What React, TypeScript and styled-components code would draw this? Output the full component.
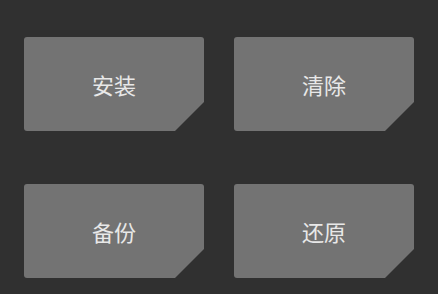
import React from "react";
import styled, { createGlobalStyle } from "styled-components";

const GlobalStyle = createGlobalStyle`
  html, body {
    margin: 0;
    padding: 0;
    background: #303030;
  }
`;

const ACTIONS = ["安装", "清除", "备份", "还原"];

const App: React.FC = () => {
  return (
    <>
      <GlobalStyle />
      <Page>
        <Grid>
          {ACTIONS.map((title) => (
            <ActionButton key={title}>{title}</ActionButton>
          ))}
        </Grid>
      </Page>
    </>
  );
};

export default App;

const Page = styled.div`
  width: 438px;
  height: 294px;
  background: #303030;
  padding: 37px 0 0 24px;
  box-sizing: border-box;
`;

const Grid = styled.div`
  display: grid;
  grid-template-columns: 180px 180px;
  grid-auto-rows: 94px;
  column-gap: 30px;
  row-gap: 53px;
`;

const ActionButton = styled.div`
  display: flex;
  align-items: center;
  justify-content: center;
  background: #737373;
  border-radius: 3px;
  clip-path: polygon(0 0, 100% 0, 100% calc(100% - 29px), calc(100% - 29px) 100%, 0 100%);
  color: #e8e8e8;
  font-family: "Noto Sans CJK SC", "Noto Sans", sans-serif;
  font-size: 22px;
  cursor: pointer;
`;
